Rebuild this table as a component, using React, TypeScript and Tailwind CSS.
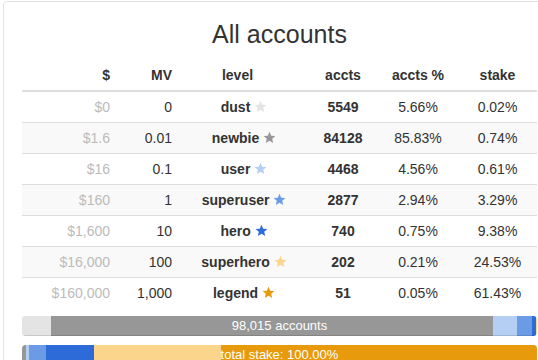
import { type FC } from "react";

interface Level {
  usd: string;
  mv: string;
  name: string;
  color: string;
  accts: string;
  acctsPct: number;
  stakePct: number;
}

const levels: Level[] = [
  { usd: "$0", mv: "0", name: "dust", color: "#e4e4e4", accts: "5549", acctsPct: 5.66, stakePct: 0.02 },
  { usd: "$1.6", mv: "0.01", name: "newbie", color: "#979797", accts: "84128", acctsPct: 85.83, stakePct: 0.74 },
  { usd: "$16", mv: "0.1", name: "user", color: "#b5cef4", accts: "4468", acctsPct: 4.56, stakePct: 0.61 },
  { usd: "$160", mv: "1", name: "superuser", color: "#6c9be6", accts: "2877", acctsPct: 2.94, stakePct: 3.29 },
  { usd: "$1,600", mv: "10", name: "hero", color: "#2d6bd9", accts: "740", acctsPct: 0.75, stakePct: 9.38 },
  { usd: "$16,000", mv: "100", name: "superhero", color: "#fbd58c", accts: "202", acctsPct: 0.21, stakePct: 24.53 },
  { usd: "$160,000", mv: "1,000", name: "legend", color: "#e69a0c", accts: "51", acctsPct: 0.05, stakePct: 61.43 },
];

const COLS = "grid grid-cols-[93px_62px_121px_90px_60px_89px] whitespace-nowrap";

const Star: FC<{ color: string }> = ({ color }) => (
  <svg
    viewBox="0 0 24 24"
    className="inline-block w-[13px] h-[13px] align-[-1px]"
    fill={color}
  >
    <path d="M12 1.5l3.1 7.2 7.8.6-5.9 5.1 1.8 7.6L12 17.9 5.2 22l1.8-7.6L1.1 9.3l7.8-.6z" />
  </svg>
);

const Bar: FC<{ label: string; field: "acctsPct" | "stakePct"; className?: string }> = ({
  label,
  field,
  className = "",
}) => (
  <div
    className={`relative h-5 w-[515px] rounded-[4px] overflow-hidden bg-[#f0f0f0] shadow-[inset_0_1px_2px_rgba(0,0,0,0.12)] ${className}`}
  >
    <div className="flex h-full">
      {levels.map((l) => (
        <div
          key={l.name}
          className="h-full shadow-[inset_0_-1px_0_rgba(0,0,0,0.12)]"
          style={{ width: `${l[field]}%`, backgroundColor: l.color }}
        />
      ))}
    </div>
    <div className="absolute inset-0 flex items-center justify-center text-[13px] leading-5 text-white whitespace-nowrap">
      {label}
    </div>
  </div>
);

export default function App() {
  return (
    <div className="w-[538px] h-[360px] overflow-hidden bg-white font-['Liberation_Sans',Arial,sans-serif] text-[#333]">
      <div className="mt-px ml-[3px] w-[553px] border border-[#e3e3e3] rounded-[4px] px-[18px] pb-5">
        <h3 className="mt-[18px] mb-3 text-center text-[25px] leading-[28px] font-normal text-[#333]">
          All accounts
        </h3>

        <div className="w-[515px] text-sm leading-5">
          <div className={`${COLS} font-bold border-b-2 border-[#ddd]`}>
            <div className="p-[5px] text-right">$</div>
            <div className="p-[5px] text-right">MV</div>
            <div className="p-[5px] text-center">level</div>
            <div className="p-[5px] text-center">accts</div>
            <div className="py-[5px] text-center">accts %</div>
            <div className="p-[5px] pl-[15px] text-center">stake</div>
          </div>

          {levels.map((l, i) => (
            <div
              key={l.name}
              className={`${COLS} ${i > 0 ? "border-t border-[#ddd]" : ""} ${i % 2 === 1 ? "bg-[#f9f9f9]" : ""}`}
            >
              <div className="p-[5px] text-right text-[#bbb]">{l.usd}</div>
              <div className="p-[5px] text-right">{l.mv}</div>
              <div className="p-[5px] pl-[18px] text-center font-bold">
                {l.name} <Star color={l.color} />
              </div>
              <div className="p-[5px] text-center font-bold">{l.accts}</div>
              <div className="py-[5px] text-center">{l.acctsPct.toFixed(2)}%</div>
              <div className="p-[5px] pl-[15px] text-center">{l.stakePct.toFixed(2)}%</div>
            </div>
          ))}
        </div>

        <Bar label="98,015 accounts" field="acctsPct" className="mt-2" />
        <Bar label="total stake: 100.00%" field="stakePct" className="mt-[9px]" />
      </div>
    </div>
  );
}
